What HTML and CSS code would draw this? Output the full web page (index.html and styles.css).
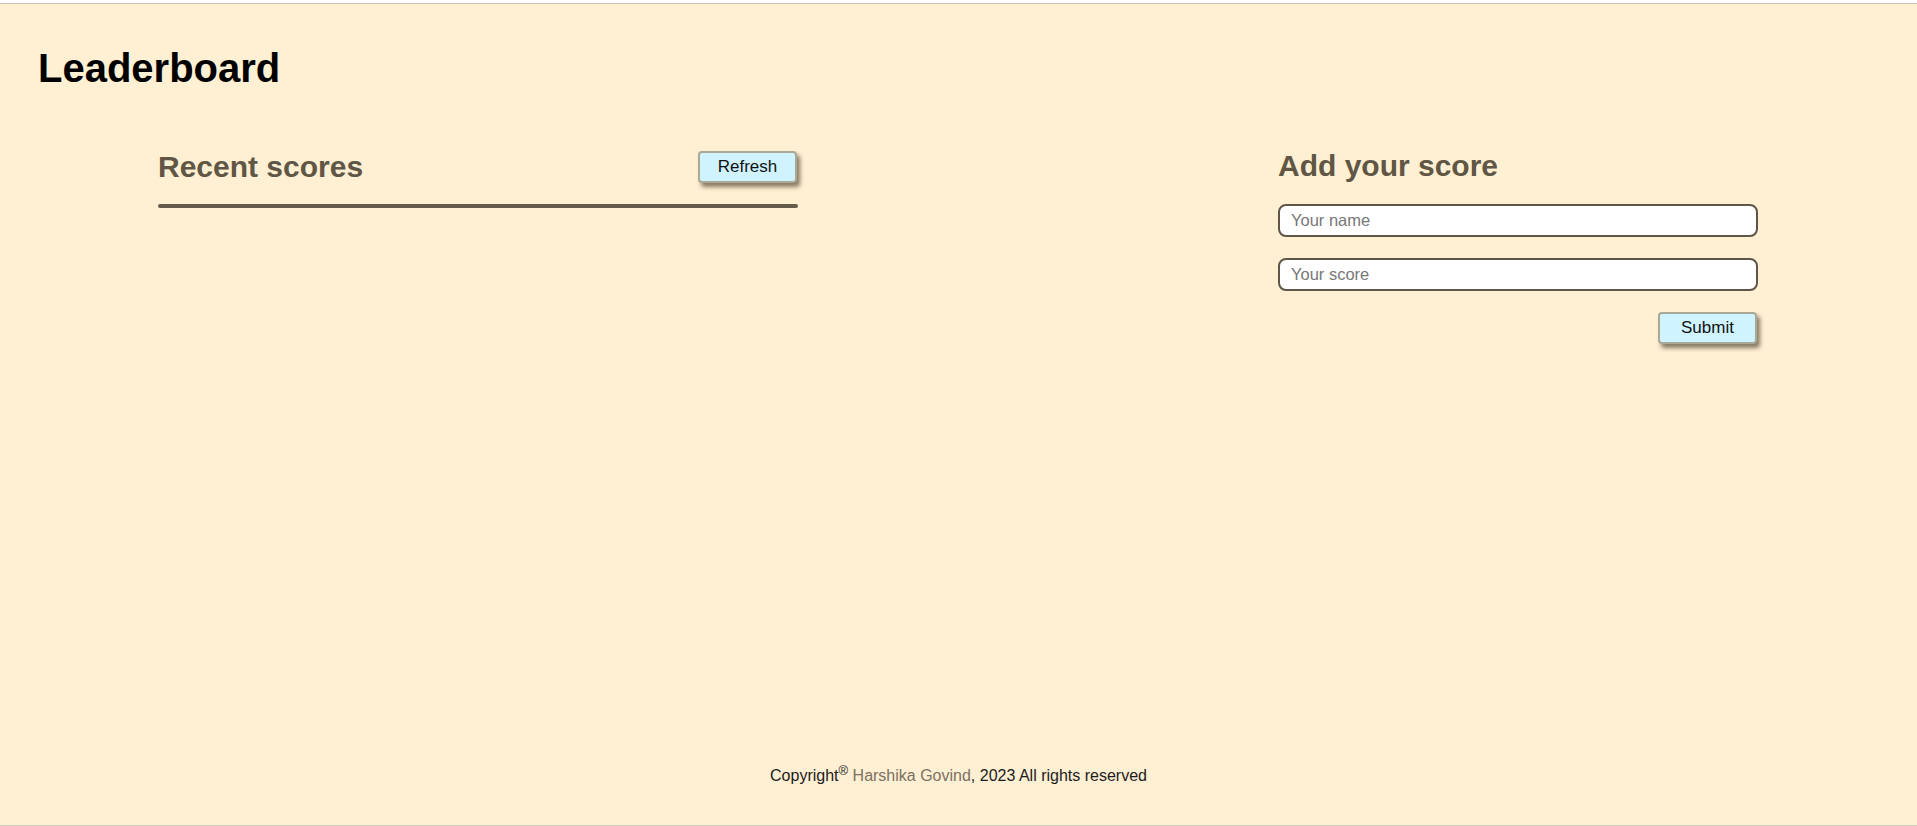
FILE: index.html
```html
<!DOCTYPE html>
<html lang="en">
<head>
<meta charset="utf-8">
<title>Leaderboard</title>
<link rel="stylesheet" href="styles.css">
</head>
<body>
  <header class="page-header">
    <h1 class="page-title">Leaderboard</h1>
  </header>
  <main class="main">
    <section class="scores">
      <div class="scores-head">
        <h2 class="section-title">Recent scores</h2>
        <button class="btn" type="button">Refresh</button>
      </div>
      <div class="scores-rule"></div>
      <ul class="scores-list"></ul>
    </section>
    <section class="add">
      <h2 class="section-title">Add your score</h2>
      <form class="add-form">
        <input class="field" type="text" placeholder="Your name">
        <input class="field" type="text" placeholder="Your score">
        <div class="form-actions">
          <button class="btn" type="button">Submit</button>
        </div>
      </form>
    </section>
  </main>
  <footer class="footer">
    <p class="footer-text">Copyright<sup class="reg">&reg;</sup> <span class="author">Harshika Govind</span>, 2023 All rights reserved</p>
  </footer>
</body>
</html>
```

FILE: styles.css
```css
* {
  box-sizing: border-box;
}

html {
  background: #ffffff;
}

body {
  margin: 3px 0 0;
  height: 823px;
  background: #ffefd3;
  border-top: 1px solid #c9c1b2;
  border-bottom: 1px solid #cdcac4;
  font-family: "Liberation Sans", Arial, sans-serif;
  display: flex;
  flex-direction: column;
}

.page-header {
  padding: 41px 38px 0;
}

.page-title {
  margin: 0;
  font-size: 40px;
  line-height: 46px;
  font-weight: 700;
  color: #000;
}

.main {
  width: 1601px;
  margin: 59px auto 0;
  display: flex;
  justify-content: space-between;
  align-items: flex-start;
  flex: 1;
}

.scores {
  width: 640px;
}

.scores-head {
  display: flex;
  justify-content: space-between;
  align-items: center;
  padding-bottom: 20px;
}

.section-title {
  margin: 0;
  font-size: 30px;
  line-height: 34px;
  font-weight: 700;
  color: #605645;
}

.scores-rule {
  height: 4px;
  border-radius: 2px;
  background: #655b4a;
}

.scores-list {
  margin: 0;
  padding: 0;
  list-style: none;
}

.btn {
  width: 99px;
  height: 32px;
  padding: 0;
  margin-right: 1px;
  background: #cff4ff;
  border: 2px solid #aaa896;
  border-radius: 4px;
  box-shadow: 3px 4px 4px rgba(70, 60, 40, 0.65);
  font-family: "Liberation Sans", Arial, sans-serif;
  font-size: 17px;
  color: #111;
  cursor: pointer;
}

.add {
  width: 481px;
  margin-top: -1px;
}

.add-form {
  display: flex;
  flex-direction: column;
  padding-top: 21px;
}

.field {
  width: 480px;
  height: 33px;
  margin-bottom: 21px;
  padding: 0 11px;
  background: #fff;
  border: 2px solid #5f5647;
  border-radius: 8px;
  font-family: "Liberation Sans", Arial, sans-serif;
  font-size: 16.5px;
  color: #222;
  outline: none;
}

.field::placeholder {
  color: #777;
}

.form-actions {
  display: flex;
  justify-content: flex-end;
}

.form-actions .btn {
  margin-right: 2px;
}

.footer {
  padding-bottom: 40px;
  text-align: center;
}

.footer-text {
  margin: 0;
  font-size: 16px;
  line-height: 18px;
  color: #1c1c1c;
}

.reg {
  font-size: 13px;
  line-height: 0;
  vertical-align: 6px;
}

.author {
  color: #7b7262;
}
```
